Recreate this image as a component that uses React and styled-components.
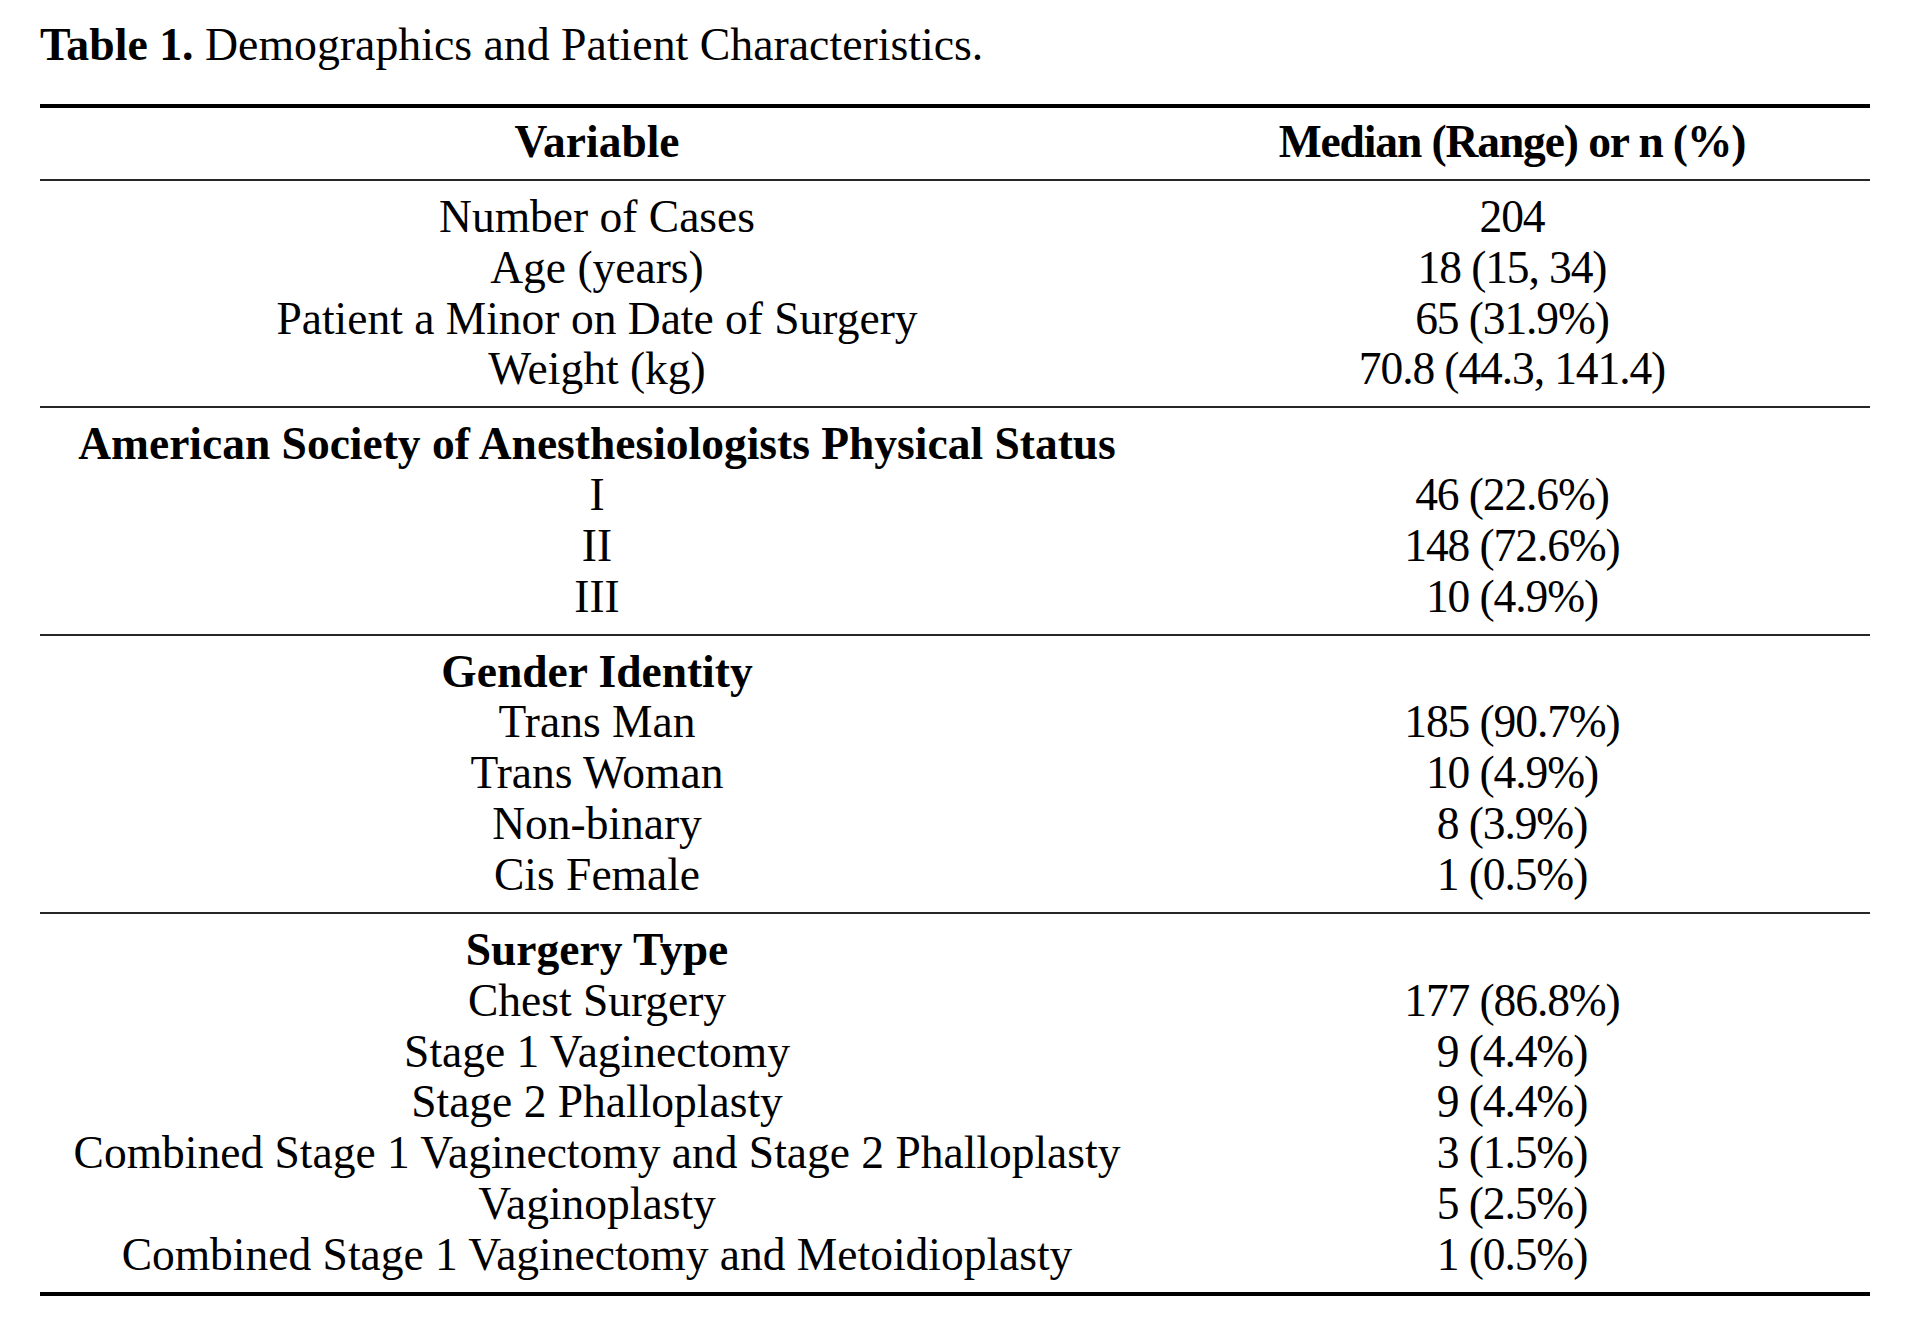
import React from 'react'
import styled, { createGlobalStyle } from 'styled-components'

const GlobalStyle = createGlobalStyle`
  html, body {
    margin: 0;
    padding: 0;
    background: #fff;
  }
  body {
    font-family: 'Liberation Serif', 'Times New Roman', serif;
    color: #000;
  }
`

const Page = styled.div`
  width: 1908px;
  height: 1320px;
  padding: 19px 38px 0 40px;
  box-sizing: border-box;
  background: #fff;
`

const Caption = styled.div`
  font-size: 45.8px;
  line-height: 52px;
  white-space: nowrap;
  margin-bottom: 33px;

  b {
    font-weight: 700;
  }
`

const Rule = styled.div`
  height: ${(p) => (p.$thick ? '4px' : '2px')};
  background: ${(p) => (p.$thick ? '#000' : '#262626')};
`

const Section = styled.div`
  padding: ${(p) => (p.$head ? '9px 0 11px' : '11px 0')};
`

const Row = styled.div`
  display: grid;
  grid-template-columns: 1114px 716px;
  font-size: 45.5px;
  line-height: 50.85px;
`

const Cell = styled.div`
  text-align: center;
  white-space: nowrap;
  font-weight: ${(p) => (p.$bold ? 700 : 400)};
  letter-spacing: ${(p) => (p.$tight ? '-1.1px' : 'normal')};
`

const sections = [
  [
    ['Number of Cases', '204'],
    ['Age (years)', '18 (15, 34)'],
    ['Patient a Minor on Date of Surgery', '65 (31.9%)'],
    ['Weight (kg)', '70.8 (44.3, 141.4)'],
  ],
  [
    ['American Society of Anesthesiologists Physical Status', '', true],
    ['I', '46 (22.6%)'],
    ['II', '148 (72.6%)'],
    ['III', '10 (4.9%)'],
  ],
  [
    ['Gender Identity', '', true],
    ['Trans Man', '185 (90.7%)'],
    ['Trans Woman', '10 (4.9%)'],
    ['Non-binary', '8 (3.9%)'],
    ['Cis Female', '1 (0.5%)'],
  ],
  [
    ['Surgery Type', '', true],
    ['Chest Surgery', '177 (86.8%)'],
    ['Stage 1 Vaginectomy', '9 (4.4%)'],
    ['Stage 2 Phalloplasty', '9 (4.4%)'],
    ['Combined Stage 1 Vaginectomy and Stage 2 Phalloplasty', '3 (1.5%)'],
    ['Vaginoplasty', '5 (2.5%)'],
    ['Combined Stage 1 Vaginectomy and Metoidioplasty', '1 (0.5%)'],
  ],
]

function App() {
  return (
    <>
      <GlobalStyle />
      <Page>
        <Caption>
          <b>Table 1.</b> Demographics and Patient Characteristics.
        </Caption>
        <Rule $thick />
        <Section $head>
          <Row>
            <Cell $bold>Variable</Cell>
            <Cell $bold $tight>Median (Range) or n (%)</Cell>
          </Row>
        </Section>
        {sections.map((rows, i) => (
          <React.Fragment key={i}>
            <Rule />
            <Section>
              {rows.map(([label, value, bold]) => (
                <Row key={label}>
                  <Cell $bold={bold}>{label}</Cell>
                  <Cell $tight>{value}</Cell>
                </Row>
              ))}
            </Section>
          </React.Fragment>
        ))}
        <Rule $thick />
      </Page>
    </>
  )
}

export default App
